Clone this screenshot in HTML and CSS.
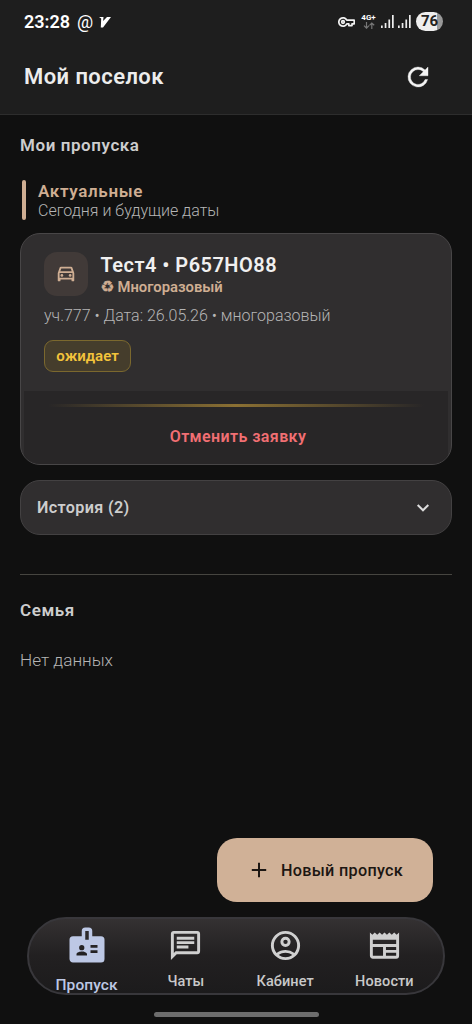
FILE: index.html
```html
<!DOCTYPE html>
<html lang="ru">
<head>
<meta charset="utf-8">
<title>Мой поселок</title>
<link rel="stylesheet" href="styles.css">
</head>
<body>
<div class="screen">
  <header class="header">
    <div class="status">
      <span class="clock">23:28</span>
      <span class="at">@</span>
      <svg class="vmark" width="12" height="12" viewBox="0 0 12 12"><path d="M0 1h4.500l-.4 4L8 1h4L4 11.500H1.800L2.200 2.500z" fill="#fff"/></svg>
      <div class="status-right">
        <svg class="key" width="17" height="12" viewBox="0 0 17 12" fill="none" stroke="#f2f2f2" stroke-width="1.700" stroke-linejoin="round"><path d="M8.800 4.200A4.200 4.200 0 1 0 8.800 7.800H10.800V9.600H14V7.800H16.200V4.200Z"/><circle cx="5" cy="6" r="1.300"/></svg>
        <div class="network"><span>4G+</span><svg width="12" height="7" viewBox="0 0 12 7" fill="none" stroke="#777" stroke-width="1.200"><path d="M3.500 0v6M1 3.700l2.500 2.500L6 3.700M8.800 7V1M6.500 3.300L8.800 1l2.400 2.300"/></svg></div>
        <svg class="signal" width="13" height="13" viewBox="0 0 13 13" fill="#eee"><path d="M0 10.500h1.700V13H0zM3.700 8h1.700v5H3.700zM7.400 4.500h1.700V13H7.400zM11 0h1.700v13H11z"/></svg>
        <svg class="signal second" width="13" height="13" viewBox="0 0 13 13" fill="#eee"><path d="M0 10.500h1.700V13H0zM3.700 8h1.700v5H3.700zM7.400 4.500h1.700V13H7.400zM11 0h1.700v13H11z"/></svg>
        <span class="battery">76</span>
      </div>
    </div>
    <div class="titlebar">
      <h1 class="title">Мой поселок</h1>
      <svg width="30" height="30" viewBox="0 0 24 24" fill="#f4f4f4"><path d="M17.650 6.350A7.960 7.960 0 0 0 12 4a8 8 0 1 0 7.730 10h-2.080A6 6 0 1 1 12 6c1.660 0 3.140.69 4.220 1.780L13 11h7V4z" stroke="#f4f4f4" stroke-width=".3"/></svg>
    </div>
  </header>

  <main class="content">
    <h2 class="section-title">Мои пропуска</h2>
    <div class="group">
      <div class="group-bar"></div>
      <div class="group-text"><div class="group-name">Актуальные</div><div class="group-note">Сегодня и будущие даты</div></div>
    </div>

    <article class="pass">
      <div class="pass-body">
        <div class="pass-head">
          <div class="pass-icon"><svg width="22" height="22" viewBox="0 0 24 24" fill="#cfae93"><path d="M18.920 5.010A1.500 1.500 0 0 0 17.500 4h-11c-.66 0-1.210.42-1.420 1.010L3 11v8c0 .55.45 1 1 1h1c.55 0 1-.45 1-1v-1h12v1c0 .55.450 1 1 1h1c.55 0 1-.45 1-1v-8zM6.850 6h10.290l1.040 3H5.810zM19 16H5v-5h14z"/><circle cx="7.500" cy="13.500" r="1.500"/><circle cx="16.500" cy="13.500" r="1.500"/></svg></div>
          <div><div class="pass-name">Тест4 • Р657НО88</div><div class="pass-type"><span class="recycle">♻</span><span>Многоразовый</span></div></div>
        </div>
        <div class="pass-meta">уч.777 • Дата: 26.05.26 • многоразовый</div>
        <span class="badge">ожидает</span>
      </div>
      <div class="pass-foot">
        <div class="gold-line"></div>
        <div class="cancel">Отменить заявку</div>
      </div>
    </article>

    <div class="history">
      <span class="history-label">История (2)</span>
      <svg width="14" height="10" viewBox="0 0 14 10" fill="none" stroke="#ddd" stroke-width="2"><path d="M1.700 2L7 7.300L12.300 2"/></svg>
    </div>

    <div class="divider"></div>
    <h2 class="section-title family">Семья</h2>
    <p class="empty">Нет данных</p>
  </main>

  <div class="fab">
    <svg width="16" height="16" viewBox="0 0 16 16" stroke="#1c1612" stroke-width="2"><path d="M8 .8v14.400M.8 8h14.400"/></svg>
    <span class="fab-label">Новый пропуск</span>
  </div>

  <nav class="nav">
    <div class="tab active">
      <svg width="42" height="42" viewBox="0 0 24 24" fill="#bdc8e5"><path fill-rule="evenodd" d="M20 7h-5V4a2 2 0 0 0-2-2h-2a2 2 0 0 0-2 2v3H4a2 2 0 0 0-2 2v11c0 1.100.9 2 2 2h16a2 2 0 0 0 2-2V9a2 2 0 0 0-2-2zM9 12a1.500 1.500 0 1 1 0 3 1.500 1.500 0 0 1 0-3zm3 6H6v-.75c0-1 2-1.500 3-1.500s3 .5 3 1.500zm1-9h-2V4h2zm5 7.500h-4V15h4zm0-3h-4V12h4z"/></svg>
      <span>Пропуск</span>
    </div>
    <div class="tab">
      <svg width="35" height="35" viewBox="0 0 24 24" fill="#d0d0d0"><path fill-rule="evenodd" d="M4 4h16v12H5.170L4 17.170zM4 2a2 2 0 0 0-2 2v18l4-4h14a2 2 0 0 0 2-2V4a2 2 0 0 0-2-2zM6 12h8v2H6zm0-3h12v2H6zm0-3h12v2H6z"/></svg>
      <span>Чаты</span>
    </div>
    <div class="tab">
      <svg width="35" height="35" viewBox="0 0 24 24" fill="#d0d0d0"><path fill-rule="evenodd" d="M12 2a10 10 0 1 0 0 20 10 10 0 0 0 0-20zM7.350 18.500C8.660 17.560 10.260 17 12 17s3.340.56 4.650 1.500a7.900 7.900 0 0 1-9.300 0zm10.790-1.380A9.950 9.950 0 0 0 12 15c-2.320 0-4.450.8-6.140 2.120A8 8 0 1 1 18.140 17.120zM12 6a3.500 3.500 0 1 0 0 7 3.500 3.500 0 0 0 0-7zm0 5a1.500 1.500 0 1 1 0-3 1.500 1.500 0 0 1 0 3z"/></svg>
      <span>Кабинет</span>
    </div>
    <div class="tab">
      <svg width="35" height="35" viewBox="0 0 24 24" fill="#d0d0d0"><path fill-rule="evenodd" d="M22 3l-1.670 1.670L18.670 3 17 4.670 15.330 3l-1.660 1.670L12 3l-1.670 1.670L8.670 3 7 4.670 5.330 3 3.670 4.670 2 3v16c0 1.100.9 2 2 2h16a2 2 0 0 0 2-2zM11 19H4v-6h7zm9 0h-7v-2h7zm0-4h-7v-2h7zm0-4H4V8h16z"/></svg>
      <span>Новости</span>
    </div>
  </nav>
  <div class="home-indicator"></div>
</div>
</body>
</html>
```
FILE: styles.css
```css
* { box-sizing: border-box; }
body { margin: 0; background: #101010; font-family: Roboto, "Noto Sans", sans-serif; color: #d0d0d0; }
h1, h2, p { margin: 0; }
svg { display: block; flex: none; }
.screen { width: 472px; height: 1024px; display: flex; flex-direction: column; overflow: hidden; white-space: nowrap; }

.header { height: 115px; flex: none; background: #1e1e1e; border-bottom: 1px solid #2d2d2d; }
.status { height: 43px; padding: 0 29px 0 24px; display: flex; align-items: center; color: #fff; }
.clock { font-size: 18px; font-weight: 600; letter-spacing: 0; }
.at { font-size: 18px; line-height: 20px; margin-left: 7px; }
.vmark { margin-left: 6px; }
.status-right { margin-left: auto; display: flex; align-items: center; }
.network { width: 15px; margin-left: 6px; display: flex; flex-direction: column; align-items: center; gap: 1px; font-size: 8px; line-height: 7px; font-weight: 700; }
.signal { margin-left: 5px; }
.second { margin-left: 4px; }
.battery { width: 27px; height: 19px; margin-left: 5px; border-radius: 10px; background: linear-gradient(90deg, #eee 76%, #999 76%); color: #222; font-size: 15px; line-height: 19px; font-weight: 700; text-align: center; }
.titlebar { height: 67px; padding: 0 39px 0 24px; display: flex; align-items: center; justify-content: space-between; }
.title { font-size: 22px; line-height: 28px; font-weight: 600; color: #ededed; letter-spacing: .43px; }

.content { flex: 1; padding: 20px 20px 0; }
.section-title { font-size: 17px; line-height: 20px; font-weight: 600; letter-spacing: .57px; color: #cdcdcd; }
.group { margin-top: 25px; padding-left: 2px; display: flex; align-items: stretch; gap: 12px; height: 40px; }
.group-bar { width: 4px; border-radius: 2px; background: #cfae93; }
.group-name { font-size: 17px; line-height: 22px; font-weight: 600; letter-spacing: .65px; color: #cfae93; }
.group-note { font-size: 16px; line-height: 18px; font-weight: 300; color: #b5b5b5; }

.pass { margin-top: 13px; height: 232px; border: 1px solid #484647; border-radius: 20px; background: #302e2f; overflow: hidden; display: flex; flex-direction: column; }
.pass-body { height: 157px; padding: 18px 23px 0; }
.pass-head { display: flex; gap: 12.5px; }
.pass-icon { width: 44px; height: 44px; border-radius: 13px; background: #413a38; display: grid; place-items: center; }
.pass-name { font-size: 20px; line-height: 26px; font-weight: 600; letter-spacing: .47px; color: #f0f0f0; }
.pass-type { display: flex; gap: 4px; font-size: 14.8px; line-height: 18px; font-weight: 600; color: #cfae93; }
.recycle { font-family: "DejaVu Sans", sans-serif; width: 13px; font-size: 15.5px; -webkit-text-stroke: .4px #cfae93; }
.pass-meta { margin-top: 10px; font-size: 16px; line-height: 20px; font-weight: 300; color: #b5b5b5; }
.badge { display: block; width: 87px; height: 32px; margin-top: 14px; border: 1px solid #7b682e; border-radius: 9px; background: #453d2c; color: #f3c33b; font-size: 15px; line-height: 30px; font-weight: 600; text-align: center; }
.pass-foot { flex: 1; background: #282627; margin: 0 3px; padding-top: 13px; }
.gold-line { height: 3px; margin: 0 24px; background: linear-gradient(90deg, transparent, #8b7033 50%, transparent); }
.cancel { margin-top: 19px; padding-left: 4px; font-size: 16px; line-height: 22px; font-weight: 600; letter-spacing: .4px; color: #f16f73; text-align: center; }

.history { margin-top: 15px; height: 55px; padding: 0 21px 0 16px; border: 1px solid #434142; border-radius: 20px; background: #302e2f; display: flex; align-items: center; justify-content: space-between; }
.history-label { font-size: 16.2px; font-weight: 600; letter-spacing: .35px; color: #cdcdcd; }
.divider { height: 1px; margin-top: 39px; background: #464540; }
.family { margin-top: 25px; }
.empty { margin-top: 30px; font-size: 17.2px; line-height: 20px; font-weight: 300; color: #b5b5b5; }

.fab { width: 216px; height: 64px; flex: none; align-self: flex-end; margin-right: 39px; border-radius: 20px; background: #d0b197; display: flex; align-items: center; padding-left: 34px; gap: 14px; }
.fab-label { font-size: 16.2px; font-weight: 500; letter-spacing: .3px; color: #1c1612; }

.nav { height: 78px; flex: none; margin: 15px 27px 0; padding: 0 9px 0 8px; border: 2px solid #38373b; border-radius: 39px; background: linear-gradient(#343132, #222021 50%, #1c1b1c); display: flex; }
.tab { flex: 1; display: flex; flex-direction: column; align-items: center; padding-top: 9px; font-size: 14.500px; line-height: 18px; font-weight: 500; letter-spacing: .1px; color: #c9c9c9; }
.tab span { margin-top: 10px; }
.tab.active { padding-top: 5px; font-size: 15.500px; color: #bdc8e5; }
.tab.active span { margin-top: 10px; }
.home-indicator { width: 165px; height: 5px; flex: none; margin: 17px auto 7px; border-radius: 3px; background: #6d6d6d; }
```
